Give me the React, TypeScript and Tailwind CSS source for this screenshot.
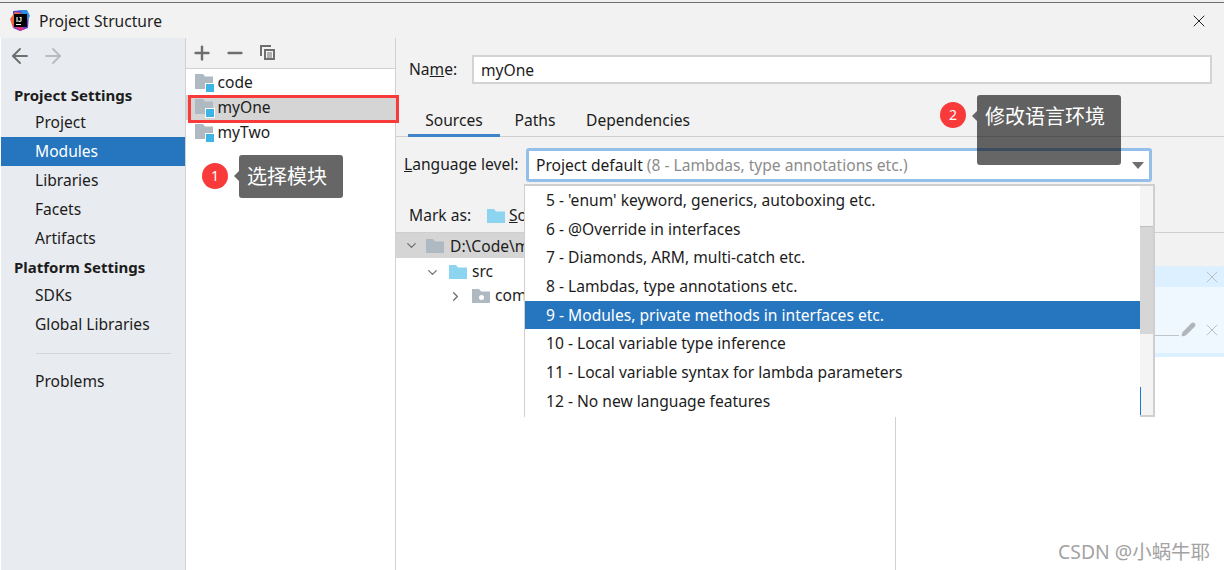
import { ArrowLeft, ArrowRight, ChevronDown, ChevronRight, Minus, Pencil, Plus, X } from "lucide-react";

const ui = "font-['Noto_Sans','Noto_Sans_CJK_SC',sans-serif]";

function Folder({ color = "#afb9c2", className = "" }: { color?: string; className?: string }) {
  return (
    <svg width="18" height="14" viewBox="0 0 18 14" className={className}>
      <path d="M0 0h7l2 2.5h9V14H0z" fill={color} />
    </svg>
  );
}

function ModuleFolder() {
  return (
    <span className="relative block w-[19px] h-[18px] shrink-0">
      <svg width="18" height="15" viewBox="0 0 18 15" className="absolute left-0 top-0">
        <path d="M0 0h8l2 2.5h8V15H0z" fill="#afb9c2" />
      </svg>
      <span className="absolute right-0 bottom-0 w-[8px] h-[8px] bg-[#3db3e6] outline outline-1 outline-white" />
    </span>
  );
}

function AppLogo() {
  return (
    <svg width="20" height="21" viewBox="0 0 20 21" className="shrink-0">
      <path d="M3 1 13 0l6 4-1 14-8 3-7-3z" fill="#5b3fd6" />
      <path d="M0 9 5 2l6 1-3 13-5 2z" fill="#f0683c" />
      <path d="M10 0h7l3 6-4 6z" fill="#2d8fe0" />
      <path d="M2 15l8 6 5-2-8-6z" fill="#d6307e" />
      <rect x="4" y="4" width="13" height="13" fill="#000" />
      <rect x="6" y="14" width="5" height="1" fill="#fff" />
      <text x="6" y="11.5" fontSize="7" fontWeight="700" fill="#fff" fontFamily="Liberation Sans, sans-serif">IJ</text>
    </svg>
  );
}

function CopyIcon({ className = "" }: { className?: string }) {
  return (
    <svg width="17" height="17" viewBox="0 0 17 17" className={className}>
      <path d="M1 1h11v2H3v9H1z" fill="#6e6e6e" />
      <path d="M5 5h11v11H5z" fill="#6e6e6e" />
      <path d="M7 7h7v7H7z" fill="#f2f2f2" />
      <path d="M8 8.5h5v1H8zM8 10.5h5v1H8zM8 12.5h5v1H8z" fill="#6e6e6e" />
    </svg>
  );
}

const navTop = [
  { label: "Project" },
  { label: "Modules", active: true },
  { label: "Libraries" },
  { label: "Facets" },
  { label: "Artifacts" },
];

const levels = [
  "5 - 'enum' keyword, generics, autoboxing etc.",
  "6 - @Override in interfaces",
  "7 - Diamonds, ARM, multi-catch etc.",
  "8 - Lambdas, type annotations etc.",
  "9 - Modules, private methods in interfaces etc.",
  "10 - Local variable type inference",
  "11 - Local variable syntax for lambda parameters",
  "12 - No new language features",
];

function NavItem({ label, active }: { label: string; active?: boolean }) {
  return (
    <div className={`h-[29px] leading-[29px] pl-[34px] ${active ? "bg-[#2675bf] text-white" : "text-[#1c1c1c]"}`}>
      {label}
    </div>
  );
}

export default function App() {
  return (
    <div className={`relative w-[1224px] h-[570px] overflow-hidden bg-white text-[15.6px] text-[#1c1c1c] ${ui}`}>
      <div className="h-[3px] bg-[#f0f0f0] border-b border-[#6f6f6f]" />

      {/* Title bar */}
      <div className="h-[35px] bg-[#f2f2f2] flex items-center pl-[10px] pr-[15px]">
        <AppLogo />
        <span className="ml-[9px] text-[#1c1c1c] relative top-px">Project Structure</span>
        <X size={20} strokeWidth={1.2} className="ml-auto text-[#222]" />
      </div>

      <div className="flex h-[532px]">
        {/* Sidebar */}
        <div className="w-[185px] ml-px shrink-0 bg-[#e8ebef] border-r border-[#d1d1d1]">
          <div className="h-[36px] flex items-center pl-[7px] gap-[9px]">
            <ArrowLeft size={24} strokeWidth={1.9} className="text-[#6e6e6e]" />
            <ArrowRight size={24} strokeWidth={1.9} className="text-[#b9bcc0]" />
          </div>
          <div className="h-[21px] leading-[21px] mt-[11px] mb-[2px] pl-[13px] font-bold text-[15px]">Project Settings</div>
          {navTop.map((n) => (
            <NavItem key={n.label} label={n.label} active={n.active} />
          ))}
          <div className="h-[28px] leading-[28px] pl-[13px] font-bold text-[15px]">Platform Settings</div>
          <NavItem label="SDKs" />
          <NavItem label="Global Libraries" />
          <div className="h-px bg-[#d1d5da] ml-[35px] mr-[14px] mt-[14px] mb-[13px]" />
          <NavItem label="Problems" />
        </div>

        {/* Module list */}
        <div className="w-[210px] shrink-0 border-r border-[#d1d1d1]">
          <div className="h-[31px] bg-[#f2f2f2] border-b border-[#d1d1d1] flex items-center pl-[5px] text-[#6e6e6e]">
            <Plus size={22} strokeWidth={2.6} />
            <Minus size={22} strokeWidth={2.6} className="ml-[11px]" />
            <CopyIcon className="ml-[13px] -mt-[2px]" />
          </div>
          <div className="pt-[1px]">
            <div className="h-[25px] flex items-center pl-[9px] gap-[3.5px]"><ModuleFolder /><span>code</span></div>
            <div className="h-[25px] flex items-center pl-[9px] gap-[3.5px] bg-[#d5d5d5]"><ModuleFolder /><span>myOne</span></div>
            <div className="h-[25px] flex items-center pl-[9px] gap-[3.5px]"><ModuleFolder /><span>myTwo</span></div>
          </div>
        </div>

        {/* Details */}
        <div className="flex-1 flex flex-col min-w-0">
          <div className="h-[67px] bg-[#f2f2f2] flex items-start pt-[17px] pl-[13px] pr-[12px]">
            <span className="w-[63px] leading-[28px]">Na<span className="underline">m</span>e:</span>
            <div className="flex-1 h-[29px] leading-[26px] bg-white border-2 border-[#d3d3d3] pl-[7px]">myOne</div>
          </div>
          <div className="h-[32px] bg-[#f2f2f2] border-b border-[#cfcfcf] flex pl-[12px]">
            <div className="w-[92px] text-center leading-[30px] border-b-[3px] border-[#4083c9] h-[32px]">Sources</div>
            <div className="w-[70px] text-center leading-[30px]">Paths</div>
            <div className="w-[136px] text-center leading-[30px]">Dependencies</div>
          </div>
          <div className="h-[95px] bg-[#f2f2f2] relative">
            <div className="flex items-center h-[34px] mt-[11px] pl-[8px] pr-[72px]">
              <span className="w-[122px]"><span className="underline">L</span>anguage level:</span>
              <div className="flex-1 h-[34px] rounded-[3px] border-[3px] border-[#94bfeb] bg-white flex items-center pl-[7px] pr-[5px]">
                <span className="relative top-px">Project default <span className="text-[#8c8c8c]">(8 - Lambdas, type annotations etc.)</span></span>
                <span className="ml-auto w-0 h-0 border-x-[6px] border-x-transparent border-t-[7px] border-t-[#6e6e6e]" />
              </div>
            </div>
            <div className="flex items-center absolute left-[13px] top-[68px] h-[22px]">
              <span className="w-[78px]">Mark as:</span>
              <Folder color="#8dd4f0" />
              <span className="ml-[4px] underline">S</span><span>o</span>
            </div>
          </div>

          <div className="flex-1 flex border-t border-[#cfcfcf] min-h-0">
            <div className="w-[500px] shrink-0 bg-white border-r border-[#d1d1d1]">
              <div className="h-[25px] bg-[#d5d5d5] flex items-center pl-[8px]">
                <ChevronDown size={15} className="text-[#6e6e6e]" />
                <Folder className="ml-[7px]" />
                <span className="ml-[6px] relative top-px">D:\Code\m</span>
              </div>
              <div className="h-[26px] mt-px flex items-center pl-[29px]">
                <ChevronDown size={15} className="text-[#6e6e6e]" />
                <Folder color="#8dd4f0" className="ml-[9px]" />
                <span className="ml-[5px]">src</span>
              </div>
              <div className="h-[22px] flex items-center pl-[52px]">
                <ChevronRight size={15} className="text-[#6e6e6e]" />
                <span className="relative ml-[9px] block">
                  <Folder />
                  <span className="absolute left-[7px] top-[6px] w-[5px] h-[5px] rounded-full bg-white" />
                </span>
                <span className="ml-[5px]">com</span>
              </div>
            </div>
            <div className="flex-1 bg-white">
              <div className="h-[33px] bg-[#f2f2f2]" />
              <div className="h-[21px] bg-[#ddf0ff] flex items-center justify-end pr-[2px]">
                <X size={20} strokeWidth={1.2} className="text-[#b9c0c6]" />
              </div>
              <div className="h-[66px] bg-[#eff8ff] flex items-end pr-[2px] pb-[16px]">
                <div className="flex-1 h-px bg-[#bfc4c8] mb-[1px]" />
                <Pencil size={15} className="ml-[2px] text-[#b0b6bb] fill-[#b0b6bb]" />
                <X size={20} strokeWidth={1.2} className="ml-[6px] -mb-[3px] text-[#b9c0c6]" />
              </div>
              <div className="h-[4px] bg-[#ddf0ff]" />
            </div>
          </div>
        </div>
      </div>

      {/* Language level dropdown */}
      <div className="absolute left-[524px] top-[184px] w-[631px] h-[233px] bg-white border-t-2 border-r-2 border-l border-[#cfcfcf] flex text-[#1c1c1c]">
        <div className="w-[615px] shrink-0 relative">
          {levels.map((l, i) => (
            <div
              key={l}
              className={`h-[28.7px] leading-[28.7px] pl-[21px] ${i === 4 ? "bg-[#2675bf] text-white" : ""}`}
            >
              {l}
            </div>
          ))}
          <div className="absolute -right-px top-[201px] w-px h-[28px] bg-[#1f78d1] z-10" />
        </div>
        <div className="flex-1 bg-[#f4f4f4] pt-[40px] border-b-2 border-[#cfcfcf]">
          <div className="h-[108px] bg-[#d6d6d6] border-t border-[#c0c0c0]" />
        </div>
      </div>

      {/* Red highlight */}
      <div className="absolute left-[188px] top-[95px] w-[211px] h-[28px] border-[3px] border-[#f93a3a]" />

      {/* Callout 1 */}
      <div className="absolute left-[202px] top-[163px] w-[26px] h-[26px] rounded-full bg-[#f93a3a] text-white text-[14px] leading-[26px] text-center">1</div>
      <div className="absolute left-[239px] top-[155px] w-[104px] h-[43px] rounded-[3px] bg-[#666] text-white text-[20px] leading-[43px] pl-[8px]">
        <span className="absolute -left-[5px] top-[16px] w-0 h-0 border-y-[5px] border-y-transparent border-r-[5px] border-r-[#666]" />
        选择模块
      </div>

      {/* Callout 2 */}
      <div className="absolute left-[940px] top-[102px] w-[26px] h-[26px] rounded-full bg-[#f93a3a] text-white text-[14px] leading-[26px] text-center">2</div>
      <div className="absolute left-[977px] top-[95px] w-[144px] h-[70px] rounded-[3px] bg-black/60 text-white text-[20px] leading-[43px] pl-[8px]">
        <span className="absolute -left-[5px] top-[16px] w-0 h-0 border-y-[5px] border-y-transparent border-r-[5px] border-r-[#666]" />
        修改语言环境
      </div>

      {/* Watermark */}
      <div className="absolute left-[1058px] top-[537px] text-[19.4px] text-[#a3a3a3]">CSDN @小蜗牛耶</div>
    </div>
  );
}
